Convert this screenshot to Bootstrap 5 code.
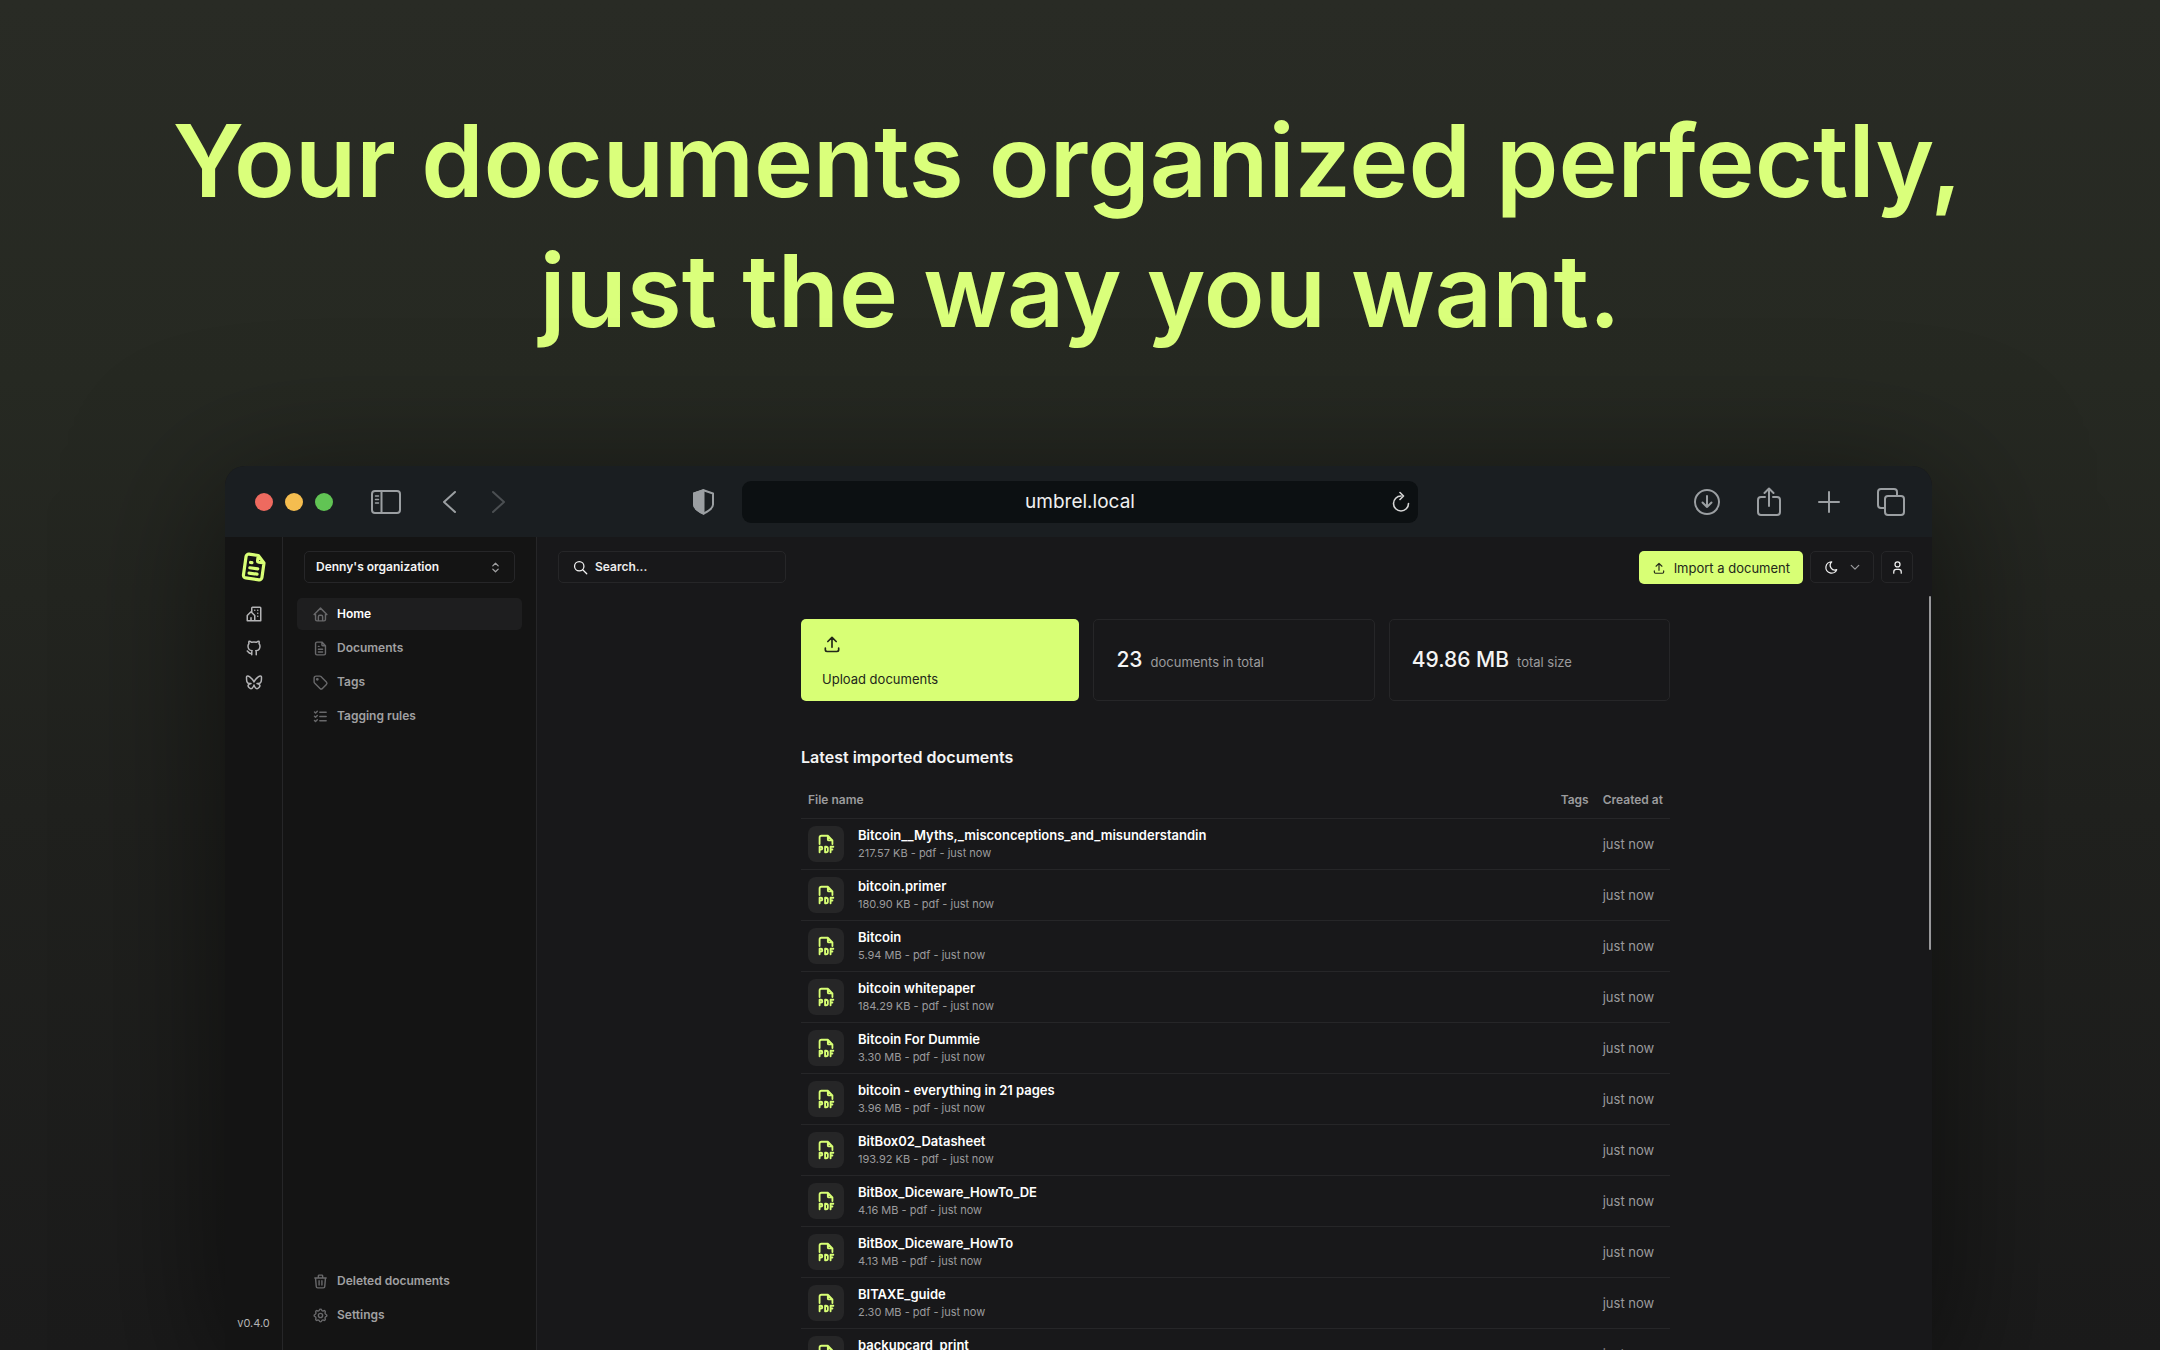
<!DOCTYPE html>
<html lang="en">
<head>
<meta charset="utf-8">
<meta name="viewport" content="width=device-width, initial-scale=1">
<title>Papra</title>
<link href="https://cdn.jsdelivr.net/npm/bootstrap@5.3.0/dist/css/bootstrap.min.css" rel="stylesheet">
<style>
:root{--lime:#d8ff75;--line:#262628;--muted:#9b9b9d;--ink:#f4f4f4}
body{font-family:Inter,"Liberation Sans",sans-serif;font-size:13px;line-height:18px;color:var(--ink);background:linear-gradient(180deg,#292b25 0%,#262922 28%,#20211e 60%,#1b1b1b 100%)}
a{text-decoration:none;color:inherit}
svg{display:block;flex:none;fill:none;stroke:currentColor;stroke-width:2;stroke-linecap:round;stroke-linejoin:round}
.hero-title{padding-top:96px;margin-bottom:110px;font-size:100px;line-height:130px;font-weight:600;color:#daff7b}
.window{margin:0 228px 0 225px;border-radius:20px 20px 0 0;overflow:hidden;background:#18181a;box-shadow:0 30px 140px 10px rgba(0,0,0,.5)}
.chrome{height:71px;background:#1a1e21;color:#9b9fa2;padding:0 27px 0 30px}
.chrome button{background:none;border:0;padding:0;color:inherit}
.chrome-side{flex:1 1 0}
.lights{gap:12px;margin-right:38px}
.panel-btn{margin-right:40px}
.back-btn{margin-right:34px}
.chrome .fwd-btn{color:#4b4f52}
.shield{margin:0 27px 0 auto}
.tools{gap:37px}
.dot{width:18px;height:18px;border-radius:50%}
.dot-red{background:#ee6a5f}
.dot-amber{background:#f5bd4f}
.dot-green{background:#61c454}
.address{height:42px;background:#0c1012;border-radius:9px;padding:0 8px 0 26px;width:676px}
.address input{background:none;border:0;outline:0;color:#f0f0f0;font-size:19px;text-align:center;min-width:0}
.address .reload{color:#d6d6d6}
.rail{width:58px;background:#141414;border-right:1px solid var(--line);color:#b4b4b6;padding:14px 0 18px}
.rail-logo{color:var(--lime);margin-bottom:22px}
.rail-logo svg{stroke-width:2.4}
.rail-links{gap:16px}
.version{font-size:11px}
.side{width:254px;background:#141414;border-right:1px solid var(--line);padding:14px 14px 19px}
.org{margin:0 7px 15px;height:32px;padding:0 30px 0 11px;font-size:12px;line-height:18px;font-weight:600;color:var(--ink);background-color:transparent;border:1px solid var(--line);border-radius:5px;background-position:right 12px center;background-size:13px 13px;background-image:url("data:image/svg+xml,%3Csvg xmlns='http://www.w3.org/2000/svg' viewBox='0 0 24 24' fill='none' stroke='%23a0a0a2' stroke-width='2.4' stroke-linecap='round' stroke-linejoin='round'%3E%3Cpath d='M7 9l5-5 5 5M17 15l-5 5-5-5'/%3E%3C/svg%3E")}
.side .nav-link{height:32px;padding:0 15px;border-radius:5px;color:#a0a0a2;font-size:12px;font-weight:600;gap:8px}
.side .nav-link svg{color:#68686a}
.side .nav-link.active{background:#1e1e1f;color:#fff}
.nav-stack{gap:2px}
.content-pane{padding-left:2px}
.topbar{padding:14px 19px 0 19px}
.topbar-actions{gap:7px}
.search{width:228px;height:32px;border:1px solid var(--line);border-radius:5px;padding:0 14px;gap:7px}
.search input{background:none;border:0;outline:0;color:#fff;font-size:12px;font-weight:600;min-width:0;padding:0}
.search input::placeholder{color:#ececec;opacity:1}
.btn-lime{background:var(--lime);color:#23271a;border:0;border-radius:5px;height:33px;padding:0 13px;font-size:13px;line-height:18px;font-weight:400;gap:8px}
.btn-line{height:32px;border:1px solid var(--line);border-radius:5px;color:#f0f0f0;padding:0 13px;gap:11px}
.btn-square{width:32px;padding:0}
.chev{color:#9a9a9c;stroke-width:3}
.main-col{width:869px;max-width:100%;margin:35px auto 0}
.tiles{gap:14px}
.tile{height:82px;border:1px solid var(--line);border-radius:5px;padding:0 22px}
.tile-upload{background:var(--lime);border:0;color:#23271a;text-align:left;padding:15px 21px 13px}
.figure-num{font-size:21px;line-height:30px;font-weight:500}
.soft{color:var(--muted)}
.section-title{margin:44px 0 14px;font-size:16px;line-height:24px;font-weight:600}
.docs{margin:0;--bs-table-bg:transparent;--bs-table-color:var(--ink);border-color:var(--line)}
.docs>:not(caption)>*>*{padding:7px;border-bottom:1px solid var(--line);box-shadow:none}
.docs>thead th{height:35px;padding:0 7px;color:var(--muted);font-size:12px;font-weight:600;vertical-align:middle}
.docs .when{width:74px;color:var(--muted);white-space:nowrap}
.docs .tagcol{width:42px}
.pdf{width:36px;height:36px;border-radius:8px;background:#262627;color:var(--lime)}
.doc-text{min-height:36px}
.doc-name{font-weight:600;line-height:18px;color:#fff}
.doc-meta{font-size:11px;line-height:18px;color:var(--muted)}
.doc-gap{gap:14px}
.scroll-thumb{position:absolute;top:59px;right:1px;width:2px;height:354px;border-radius:2px;background:#98989a}
</style>
</head>
<body class="vh-100 overflow-hidden d-flex flex-column">
<svg width="0" height="0" class="position-absolute" aria-hidden="true">
<symbol id="i-file" viewBox="0 0 24 24"><path d="M14 3v4a1 1 0 0 0 1 1h4M17 21H7a2 2 0 0 1-2-2V5a2 2 0 0 1 2-2h7l5 5v11a2 2 0 0 1-2 2zM9 9h1M9 13h6M9 17h6"/></symbol>
<symbol id="i-home" viewBox="0 0 24 24"><path d="M5 12H3l9-9 9 9h-2M5 12v7a2 2 0 0 0 2 2h10a2 2 0 0 0 2-2v-7M9 21v-6a2 2 0 0 1 2-2h2a2 2 0 0 1 2 2v6"/></symbol>
<symbol id="i-tag" viewBox="0 0 24 24"><circle cx="7.5" cy="7.5" r="1"/><path d="M3 6v5.172a2 2 0 0 0 .586 1.414l7.71 7.71a2.41 2.41 0 0 0 3.408 0l5.592-5.592a2.41 2.41 0 0 0 0-3.408l-7.71-7.71A2 2 0 0 0 11.172 3H6a3 3 0 0 0-3 3z"/></symbol>
<symbol id="i-rules" viewBox="0 0 24 24"><path d="M3.500 5.500L5 7l2.500-2.500M3.500 11.500L5 13l2.500-2.500M3.500 17.500L5 19l2.500-2.500M11 6h9M11 12h9M11 18h9"/></symbol>
<symbol id="i-trash" viewBox="0 0 24 24"><path d="M4 7h16M10 11v6M14 11v6M5 7l1 12a2 2 0 0 0 2 2h8a2 2 0 0 0 2-2l1-12M9 7V4a1 1 0 0 1 1-1h4a1 1 0 0 1 1 1v3"/></symbol>
<symbol id="i-cog" viewBox="0 0 24 24"><path d="M10.325 4.317c.426-1.756 2.924-1.756 3.350 0a1.724 1.724 0 0 0 2.573 1.066c1.543-.94 3.310.826 2.370 2.370a1.724 1.724 0 0 0 1.065 2.572c1.756.426 1.756 2.924 0 3.350a1.724 1.724 0 0 0-1.066 2.573c.94 1.543-.826 3.310-2.370 2.370a1.724 1.724 0 0 0-2.572 1.065c-.426 1.756-2.924 1.756-3.350 0a1.724 1.724 0 0 0-2.573-1.066c-1.543.94-3.310-.826-2.370-2.370a1.724 1.724 0 0 0-1.065-2.572c-1.756-.426-1.756-2.924 0-3.350a1.724 1.724 0 0 0 1.066-2.573c-.94-1.543.826-3.310 2.370-2.370 1 .608 2.296.07 2.572-1.065z"/><circle cx="12" cy="12" r="3"/></symbol>
<symbol id="i-github" viewBox="0 0 24 24"><path d="M9 19c-4.300 1.400-4.300-2.500-6-3m12 5v-3.500c0-1 .1-1.400-.5-2 2.800-.3 5.500-1.400 5.500-6a4.600 4.600 0 0 0-1.300-3.200 4.200 4.200 0 0 0-.1-3.200s-1.100-.3-3.500 1.300a12.300 12.300 0 0 0-6.200 0C6.500 2.800 5.400 3.100 5.400 3.100a4.200 4.200 0 0 0-.1 3.200A4.600 4.600 0 0 0 4 9.500c0 4.600 2.700 5.700 5.500 6-.6.6-.6 1.200-.5 2V21"/></symbol>
<symbol id="i-bluesky" viewBox="0 0 24 24"><path d="M6.335 5.144C4.681 3.945 2 3.017 2 5.970c0 .59.35 4.953.556 5.661C3.269 14.094 5.686 14.381 8 14c-4.045.665-4.889 3.208-2.667 5.410C6.363 20.428 7.246 21 8 21c2 0 3.134-2.769 3.500-3.500.333-.667.5-1.167.5-1.500 0 .333.167.833.5 1.500.366.731 1.500 3.500 3.500 3.500.754 0 1.637-.571 2.667-1.590C20.889 17.207 20.045 14.664 16 14c2.314.38 4.730.094 5.444-2.369.206-.708.556-5.072.556-5.661 0-2.953-2.680-2.025-4.335-.826C15.372 6.806 12.905 10.192 12 12c-.905-1.808-3.372-5.194-5.665-6.856z"/></symbol>
<symbol id="i-building" viewBox="0 0 24 24"><path d="M8 9l5 5v7H8v-4m0 4H3v-7l5-5m1 1V4a1 1 0 0 1 1-1h10a1 1 0 0 1 1 1v17h-8M13 7v.01M17 7v.01M17 11v.01M17 15v.01"/></symbol>
<symbol id="i-upload" viewBox="0 0 24 24"><path d="M4 17v2a2 2 0 0 0 2 2h12a2 2 0 0 0 2-2v-2M7 9l5-5 5 5M12 4v12"/></symbol>
<symbol id="i-pdf" viewBox="0 0 24 24"><path d="M14 3v4a1 1 0 0 0 1 1h4M5 12V5a2 2 0 0 1 2-2h7l5 5v4M5 18h1.500a1.500 1.500 0 0 0 0-3H5v6M17 18h2M20 15h-3v6M11 15v6h1a2 2 0 0 0 2-2v-2a2 2 0 0 0-2-2z"/></symbol>
</svg>

<h1 class="hero-title text-center flex-shrink-0">Your documents organized perfectly,&nbsp;<br>just the way you want.</h1>

<div class="window d-flex flex-column flex-grow-1">
  <div class="chrome d-flex align-items-center flex-shrink-0">
    <div class="chrome-side d-flex align-items-center">
      <div class="lights d-flex">
        <span class="dot dot-red"></span><span class="dot dot-amber"></span><span class="dot dot-green"></span>
      </div>
      <button class="panel-btn" aria-label="Sidebar"><svg width="30" height="24" viewBox="0 0 30 24"><rect x="1" y="1" width="28" height="22" rx="3"/><path d="M10.500 1v22"/><path d="M4.500 6h3M4.500 9.500h3M4.500 13h3" stroke-width="1.500"/></svg></button>
      <button class="back-btn" aria-label="Back"><svg width="16" height="24" viewBox="0 0 16 24"><path d="M14 2L3 12l11 10"/></svg></button>
      <button class="fwd-btn" aria-label="Forward"><svg width="16" height="24" viewBox="0 0 16 24"><path d="M2 2l11 10L2 22"/></svg></button>
      <svg class="shield" width="23" height="26" viewBox="0 0 23 26"><path d="M11.500 1.200L21 4.500v11c0 4-5 7-9.500 9.200C7 22.500 2 19.500 2 15.500v-11z"/><path d="M11.500 1.200L2 4.500v11c0 4 5 7 9.500 9.200z" fill="currentColor"/></svg>
    </div>
    <div class="address d-flex align-items-center">
      <input class="flex-grow-1" type="text" value="umbrel.local" aria-label="Address">
      <button class="reload" aria-label="Reload"><svg width="18" height="22" viewBox="0 0 18 22"><path d="M9 5a7.500 7.500 0 1 0 7.500 7.500M8 1.500L11.500 5 8 8.500" stroke-width="1.600"/></svg></button>
    </div>
    <div class="chrome-side tools d-flex align-items-center justify-content-end">
      <button aria-label="Downloads"><svg width="26" height="26" viewBox="0 0 26 26"><circle cx="13" cy="13" r="12"/><path d="M13 7v11M8.500 13.500L13 18l4.500-4.500"/></svg></button>
      <button aria-label="Share"><svg width="24" height="30" viewBox="0 0 24 30"><path d="M8 10H4a3 3 0 0 0-3 3v12a3 3 0 0 0 3 3h16a3 3 0 0 0 3-3V13a3 3 0 0 0-3-3h-4M12 19V2M7.500 6L12 1.500 16.500 6"/></svg></button>
      <button aria-label="New tab"><svg width="22" height="22" viewBox="0 0 22 22"><path d="M11 1v20M1 11h20"/></svg></button>
      <button aria-label="Tabs"><svg width="28" height="28" viewBox="0 0 28 28"><rect x="8" y="8" width="19" height="19" rx="3"/><path d="M8 20H4a3 3 0 0 1-3-3V4a3 3 0 0 1 3-3h13a3 3 0 0 1 3 3v4"/></svg></button>
    </div>
  </div>

  <div class="d-flex flex-grow-1 overflow-hidden position-relative">
    <aside class="rail d-flex flex-column align-items-center flex-shrink-0">
      <a href="#" class="rail-logo" aria-label="Home"><svg width="32" height="32" viewBox="0 0 24 24"><use href="#i-file" transform="rotate(8 12 12)"/></svg></a>
      <div class="rail-links d-flex flex-column align-items-center">
        <a href="#" aria-label="Organization"><svg width="18" height="18"><use href="#i-building"/></svg></a>
        <a href="#" aria-label="GitHub"><svg width="18" height="18"><use href="#i-github"/></svg></a>
        <a href="#" aria-label="Bluesky"><svg width="18" height="18"><use href="#i-bluesky"/></svg></a>
      </div>
      <span class="version mt-auto">v0.4.0</span>
    </aside>
    <nav class="side d-flex flex-column flex-shrink-0">
      <select class="form-select org w-auto" aria-label="Organization"><option>Denny's organization</option></select>
      <div class="nav flex-column nav-stack">
        <a class="nav-link active d-flex align-items-center" href="#"><svg width="17" height="17"><use href="#i-home"/></svg>Home</a>
        <a class="nav-link d-flex align-items-center" href="#"><svg width="17" height="17"><use href="#i-file"/></svg>Documents</a>
        <a class="nav-link d-flex align-items-center" href="#"><svg width="17" height="17"><use href="#i-tag"/></svg>Tags</a>
        <a class="nav-link d-flex align-items-center" href="#"><svg width="17" height="17"><use href="#i-rules"/></svg>Tagging rules</a>
      </div>
      <div class="nav flex-column nav-stack mt-auto">
        <a class="nav-link d-flex align-items-center" href="#"><svg width="17" height="17"><use href="#i-trash"/></svg>Deleted documents</a>
        <a class="nav-link d-flex align-items-center" href="#"><svg width="17" height="17"><use href="#i-cog"/></svg>Settings</a>
      </div>
    </nav>
    <main class="content-pane flex-grow-1">
      <div class="topbar d-flex justify-content-between">
        <label class="search d-flex align-items-center"><svg width="15" height="15" viewBox="0 0 24 24"><circle cx="10" cy="10" r="7.500"/><path d="M22 22l-6.500-6.500"/></svg><input class="w-100" type="text" placeholder="Search..." aria-label="Search"></label>
        <div class="topbar-actions d-flex">
          <button class="btn btn-lime d-flex align-items-center"><svg width="14" height="14"><use href="#i-upload"/></svg>Import a document</button>
          <button class="btn btn-line d-flex align-items-center" aria-label="Theme"><svg width="15" height="15" viewBox="0 0 24 24"><path d="M12 3h.393a7.500 7.500 0 0 0 7.920 12.446A9 9 0 1 1 12 3z"/></svg><svg class="chev" width="10" height="10" viewBox="0 0 24 24"><path d="M3 8l9 9 9-9"/></svg></button>
          <button class="btn btn-line btn-square d-flex align-items-center justify-content-center" aria-label="Account"><svg width="15" height="15" viewBox="0 0 24 24"><circle cx="12" cy="7" r="4"/><path d="M6 21v-2a4 4 0 0 1 4-4h4a4 4 0 0 1 4 4v2"/></svg></button>
        </div>
      </div>
      <div class="main-col">
        <div class="tiles d-flex">
          <button class="tile tile-upload d-flex flex-column justify-content-between align-items-start w-100"><svg width="20" height="20"><use href="#i-upload"/></svg><span>Upload documents</span></button>
          <div class="tile w-100 d-flex align-items-center"><div class="d-flex align-items-baseline gap-2"><span class="figure-num">23</span><span class="soft">documents in total</span></div></div>
          <div class="tile w-100 d-flex align-items-center"><div class="d-flex align-items-baseline gap-2"><span class="figure-num">49.86 MB</span><span class="soft">total size</span></div></div>
        </div>
        <h2 class="section-title">Latest imported documents</h2>
        <table class="table docs align-middle">
          <thead><tr><th>File name</th><th class="tagcol">Tags</th><th class="when">Created at</th></tr></thead>
          <tbody>
            <tr><td><div class="d-flex align-items-center doc-gap"><span class="pdf d-flex align-items-center justify-content-center"><svg width="22" height="22"><use href="#i-pdf"/></svg></span><div class="doc-text"><div class="doc-name">Bitcoin__Myths,_misconceptions_and_misunderstandin</div><div class="doc-meta">217.57 KB - pdf - just now</div></div></div></td><td></td><td class="when">just now</td></tr>
            <tr><td><div class="d-flex align-items-center doc-gap"><span class="pdf d-flex align-items-center justify-content-center"><svg width="22" height="22"><use href="#i-pdf"/></svg></span><div class="doc-text"><div class="doc-name">bitcoin.primer</div><div class="doc-meta">180.90 KB - pdf - just now</div></div></div></td><td></td><td class="when">just now</td></tr>
            <tr><td><div class="d-flex align-items-center doc-gap"><span class="pdf d-flex align-items-center justify-content-center"><svg width="22" height="22"><use href="#i-pdf"/></svg></span><div class="doc-text"><div class="doc-name">Bitcoin</div><div class="doc-meta">5.94 MB - pdf - just now</div></div></div></td><td></td><td class="when">just now</td></tr>
            <tr><td><div class="d-flex align-items-center doc-gap"><span class="pdf d-flex align-items-center justify-content-center"><svg width="22" height="22"><use href="#i-pdf"/></svg></span><div class="doc-text"><div class="doc-name">bitcoin whitepaper</div><div class="doc-meta">184.29 KB - pdf - just now</div></div></div></td><td></td><td class="when">just now</td></tr>
            <tr><td><div class="d-flex align-items-center doc-gap"><span class="pdf d-flex align-items-center justify-content-center"><svg width="22" height="22"><use href="#i-pdf"/></svg></span><div class="doc-text"><div class="doc-name">Bitcoin For Dummie</div><div class="doc-meta">3.30 MB - pdf - just now</div></div></div></td><td></td><td class="when">just now</td></tr>
            <tr><td><div class="d-flex align-items-center doc-gap"><span class="pdf d-flex align-items-center justify-content-center"><svg width="22" height="22"><use href="#i-pdf"/></svg></span><div class="doc-text"><div class="doc-name">bitcoin - everything in 21 pages</div><div class="doc-meta">3.96 MB - pdf - just now</div></div></div></td><td></td><td class="when">just now</td></tr>
            <tr><td><div class="d-flex align-items-center doc-gap"><span class="pdf d-flex align-items-center justify-content-center"><svg width="22" height="22"><use href="#i-pdf"/></svg></span><div class="doc-text"><div class="doc-name">BitBox02_Datasheet</div><div class="doc-meta">193.92 KB - pdf - just now</div></div></div></td><td></td><td class="when">just now</td></tr>
            <tr><td><div class="d-flex align-items-center doc-gap"><span class="pdf d-flex align-items-center justify-content-center"><svg width="22" height="22"><use href="#i-pdf"/></svg></span><div class="doc-text"><div class="doc-name">BitBox_Diceware_HowTo_DE</div><div class="doc-meta">4.16 MB - pdf - just now</div></div></div></td><td></td><td class="when">just now</td></tr>
            <tr><td><div class="d-flex align-items-center doc-gap"><span class="pdf d-flex align-items-center justify-content-center"><svg width="22" height="22"><use href="#i-pdf"/></svg></span><div class="doc-text"><div class="doc-name">BitBox_Diceware_HowTo</div><div class="doc-meta">4.13 MB - pdf - just now</div></div></div></td><td></td><td class="when">just now</td></tr>
            <tr><td><div class="d-flex align-items-center doc-gap"><span class="pdf d-flex align-items-center justify-content-center"><svg width="22" height="22"><use href="#i-pdf"/></svg></span><div class="doc-text"><div class="doc-name">BITAXE_guide</div><div class="doc-meta">2.30 MB - pdf - just now</div></div></div></td><td></td><td class="when">just now</td></tr>
            <tr><td><div class="d-flex align-items-center doc-gap"><span class="pdf d-flex align-items-center justify-content-center"><svg width="22" height="22"><use href="#i-pdf"/></svg></span><div class="doc-text"><div class="doc-name">backupcard_print</div></div></div></td><td></td><td class="when">just now</td></tr>
          </tbody>
        </table>
      </div>
    </main>
    <span class="scroll-thumb"></span>
  </div>
</div>
<script src="https://cdn.jsdelivr.net/npm/bootstrap@5.3.0/dist/js/bootstrap.bundle.min.js"></script>
</body>
</html>
